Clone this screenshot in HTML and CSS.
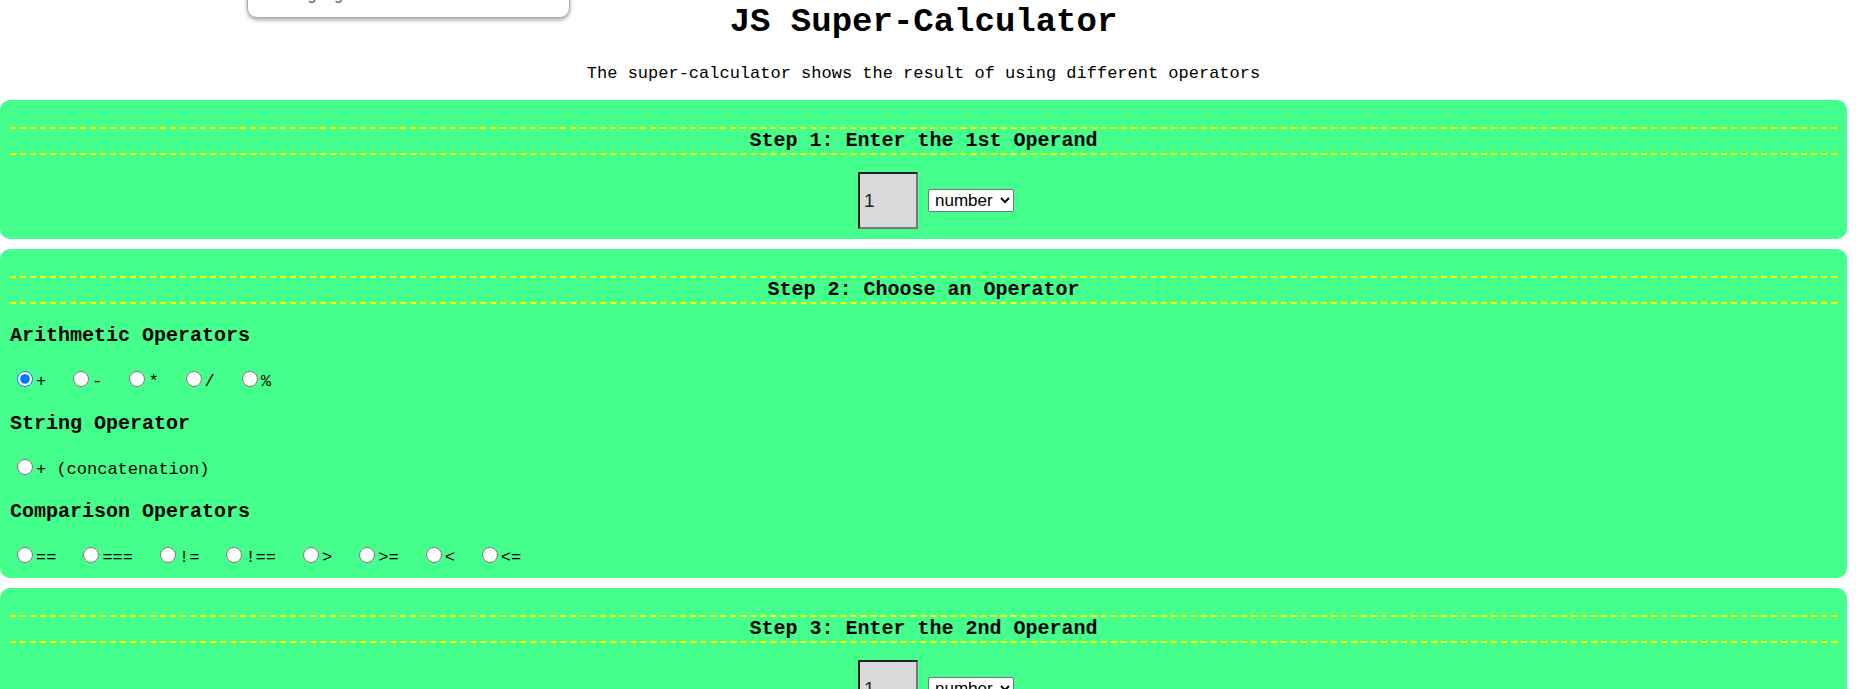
FILE: index.html
```html
<!DOCTYPE html>
<html lang="en">
<head>
<meta charset="utf-8">
<title>JS Super-Calculator</title>
<link rel="stylesheet" href="styles.css">
</head>
<body>
<aside class="popup">language</aside>
<header class="intro">
<h1>JS Super-Calculator</h1>
<p>The super-calculator shows the result of using different operators</p>
</header>
<main class="steps">
<section class="step">
<h2>Step 1: Enter the 1st Operand</h2>
<div class="operand">
<input class="value" type="text" value="1" aria-label="1st operand">
<select class="type" aria-label="1st operand type"><option>number</option><option>string</option></select>
</div>
</section>
<section class="step">
<h2>Step 2: Choose an Operator</h2>
<h3>Arithmetic Operators</h3>
<div class="operators">
<label><input type="radio" name="operator" checked>+</label>
<label><input type="radio" name="operator">-</label>
<label><input type="radio" name="operator">*</label>
<label><input type="radio" name="operator">/</label>
<label><input type="radio" name="operator">%</label>
</div>
<h3>String Operator</h3>
<div class="operators">
<label><input type="radio" name="operator">+ (concatenation)</label>
</div>
<h3>Comparison Operators</h3>
<div class="operators">
<label><input type="radio" name="operator">==</label>
<label><input type="radio" name="operator">===</label>
<label><input type="radio" name="operator">!=</label>
<label><input type="radio" name="operator">!==</label>
<label><input type="radio" name="operator">&gt;</label>
<label><input type="radio" name="operator">&gt;=</label>
<label><input type="radio" name="operator">&lt;</label>
<label><input type="radio" name="operator">&lt;=</label>
</div>
</section>
<section class="step">
<h2>Step 3: Enter the 2nd Operand</h2>
<div class="operand">
<input class="value" type="text" value="1" aria-label="2nd operand">
<select class="type" aria-label="2nd operand type"><option>number</option><option>string</option></select>
</div>
</section>
</main>
</body>
</html>
```
FILE: styles.css
```css
html {
  overflow: hidden;
}

body {
  margin: 0 9px 0 0;
  background: #fff;
  color: #000;
  font: 17px/20px "Courier New", "Liberation Mono", monospace;
}

.popup {
  position: absolute;
  top: -31px;
  left: 247px;
  box-sizing: border-box;
  width: 323px;
  height: 49px;
  padding: 15px 38px;
  border: 1px solid #aaa;
  border-radius: 10px;
  background: #fff;
  box-shadow: 0 2px 4px rgba(0, 0, 0, 0.35);
  color: #555;
  font: 16px/20px Roboto, sans-serif;
}

.intro {
  text-align: center;
}

.intro h1 {
  margin: 0;
  padding-top: 2px;
  font-size: 34px;
  line-height: 40px;
}

.intro p {
  margin: 22px 0 16px;
}

.steps {
  display: grid;
  gap: 10px;
}

.step {
  padding: 27px 10px 10px;
  border-radius: 10px;
  background: #44ff8b;
}

.step h2 {
  margin: 0 0 17px;
  border: dashed #ff0;
  border-width: 2px 0;
  font-size: 20px;
  line-height: 24px;
  text-align: center;
}

.step h3 {
  margin: 0 0 20px;
  font-size: 20px;
  line-height: 30px;
}

.operand {
  display: flex;
  justify-content: center;
  align-items: center;
  gap: 10px;
  padding-left: 25px;
}

.value {
  box-sizing: border-box;
  width: 60px;
  height: 57px;
  padding: 2px 4px;
  border: 2px inset #767676;
  background: #d9d9d9;
  color: #222;
  font: 19px "Liberation Sans", Arial, sans-serif;
}

.type {
  box-sizing: border-box;
  width: 86px;
  height: 23px;
  padding: 0 2px;
  border: 1px solid #767676;
  border-radius: 2px;
  background: #fff;
  color: #000;
  font: 17px "Liberation Sans", Arial, sans-serif;
}

.operators {
  display: flex;
  flex-wrap: wrap;
  gap: 20px;
}

.operators + h3 {
  margin-top: 17px;
}

.operators label {
  display: flex;
  align-items: flex-end;
}

.operators input {
  width: 16px;
  height: 16px;
  margin: 0 3px 5px 7px;
}
```
